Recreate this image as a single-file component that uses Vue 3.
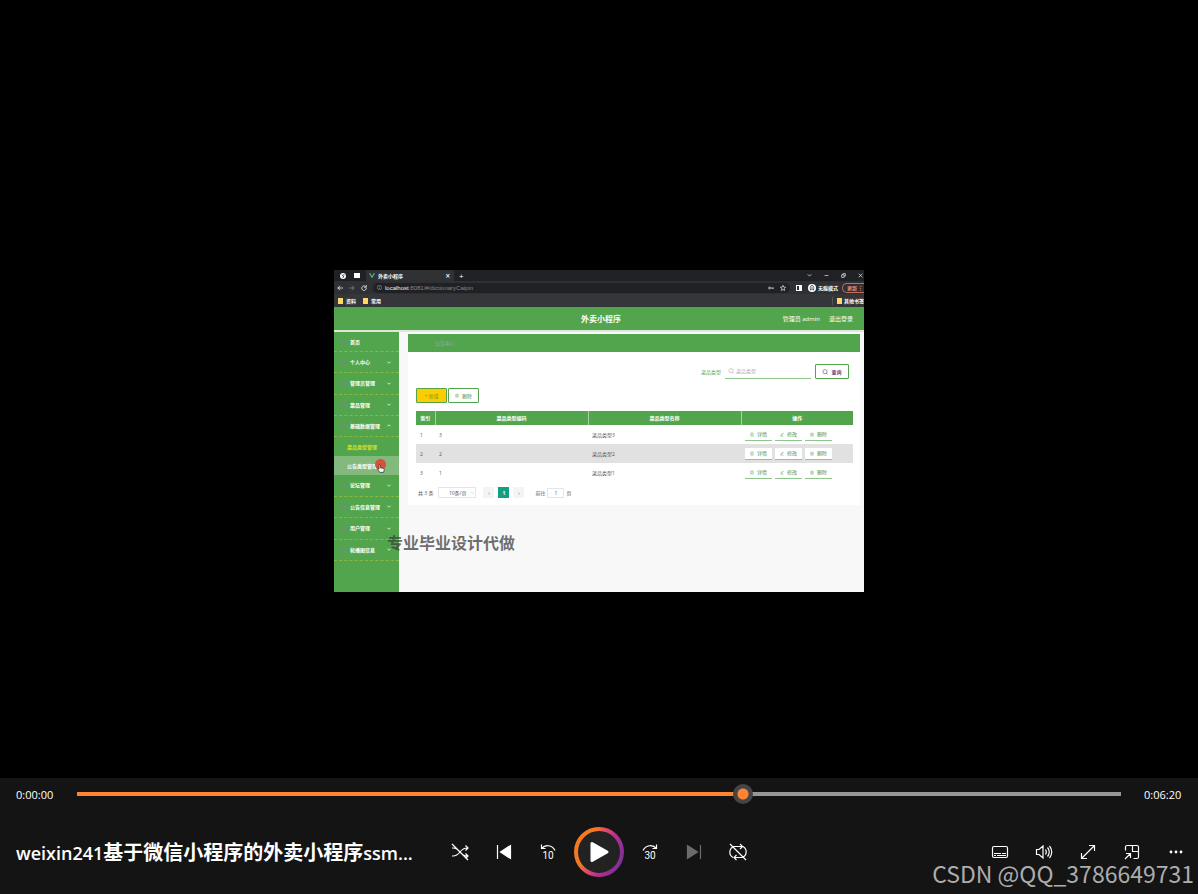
<script setup>
import { ref, computed } from 'vue'

const progress = ref(641)
const played = computed(() => progress.value / 10 + '%')

const topMenu = [
  { name: '个人中心', open: false },
  { name: '管理员管理', open: false },
  { name: '菜品管理', open: false },
  { name: '基础数据管理', open: true }
]
const bottomMenu = ['论坛管理', '公告信息管理', '用户管理', '轮播图信息']
const rows = [
  { index: 1, code: 3, name: '菜品类型3' },
  { index: 2, code: 2, name: '菜品类型2' },
  { index: 3, code: 1, name: '菜品类型1' }
]
const actions = [
  { name: '详情', icon: 'M2 1h6v8H2zM4 4h2M4 6h2' },
  { name: '修改', icon: 'M2 7l5-6 1 2-5 5zM1 9h8' },
  { name: '删除', icon: 'M1 3h8M4 1h2M2 3v6h6V3M4 5v2M6 5v2' }
]
</script>

<template>
  <div class="player">
    <main class="stage">
      <div class="video">
        <div class="tabs">
          <svg class="tabicon" viewBox="0 0 10 10"><circle cx="5" cy="5" r="5" fill="#fff" /><path d="M3 3l3 2-1 3M6 2l2 2" stroke="#222" fill="none" stroke-width="1.5" /></svg>
          <span class="window"></span>
          <div class="tab">
            <svg class="vue" viewBox="0 0 10 8"><path d="M1 0l4 7 4-7" fill="none" stroke="#41b883" stroke-width="2" /></svg>
            <span>外卖小程序</span>
            <button class="plain close" aria-label="关闭标签页">×</button>
          </div>
          <button class="plain new" aria-label="新标签页">+</button>
          <div class="wincontrols">
            <svg viewBox="0 0 8 8"><path d="M1 2l3 3 3-3" /></svg>
            <svg viewBox="0 0 8 8"><path d="M1 4h6" /></svg>
            <svg viewBox="0 0 8 8"><path d="M1 3h4v4H1zM3 3V1h4v4H5" /></svg>
            <svg viewBox="0 0 8 8"><path d="M1 1l6 6M7 1L1 7" /></svg>
          </div>
        </div>
        <div class="toolbar">
          <svg class="nav" viewBox="0 0 8 8"><path d="M8 4H1M4 1L1 4l3 3" /></svg>
          <svg class="nav dim" viewBox="0 0 8 8"><path d="M0 4h7M4 1l3 3-3 3" /></svg>
          <svg class="nav" viewBox="0 0 8 8"><path d="M7 4a3 3 0 1 1-1-2M7 0v3H4" /></svg>
          <div class="address">
            <svg class="info" viewBox="0 0 8 8"><circle cx="4" cy="4" r="3.5" /><path d="M4 2v1M4 4v2" /></svg>
            <span class="url"><b>localhost</b>:8081/#/dictionaryCaipin</span>
            <svg class="nav" viewBox="0 0 8 8"><circle cx="2" cy="4" r="1.3" /><path d="M3 4h5v1M6 4v1" /></svg>
            <svg class="nav" viewBox="0 0 8 8"><path d="M4 .5l1 2.3 2.5.2-2 1.7.7 2.6L4 6 1.8 7.3l.7-2.6-2-1.7 2.5-.2z" /></svg>
          </div>
          <span class="panel"></span>
          <svg class="avatar" viewBox="0 0 10 10"><circle cx="5" cy="5" r="5" fill="#fff" /><path d="M2 5h6M3 4l1-2h2l1 2" stroke="#333" fill="none" /><circle cx="3.5" cy="7" r="1" /><circle cx="6.5" cy="7" r="1" /></svg>
          <span class="private">无痕模式</span>
          <button class="update">更新<i>⋮</i></button>
        </div>
        <div class="bookmarks">
          <i class="folder"></i><span>资料</span>
          <i class="folder"></i><span>常用</span>
          <span class="other"><i class="folder"></i>其他书签</span>
        </div>
        <header class="apphead">
          <h2>外卖小程序</h2>
          <span class="user">管理员 admin</span>
          <a href="#">退出登录</a>
        </header>
        <div class="appbody">
          <nav class="side">
            <a href="#" class="item first"><i class="dot"></i>首页</a>
            <div class="group top">
              <a v-for="m in topMenu" :key="m.name" href="#" class="item">
                <i class="dot"></i>{{ m.name }}
                <svg class="chev" viewBox="0 0 8 6"><path :d="m.open ? 'M2 4l2-2 2 2' : 'M2 2l2 2 2-2'" /></svg>
              </a>
            </div>
            <a href="#" class="sub current">菜品类型管理</a>
            <a href="#" class="sub hover">公告类型管理
              <span class="click"></span>
              <svg class="hand" viewBox="0 0 12 14"><path d="M4 1c1 0 1 .5 1 1v4l5 1c1 0 1 1 1 2l-1 4H4L1 8c0-1 1-1 2 0V2c0-1 0-1 1-1z" fill="#fff" stroke="#222" /></svg>
            </a>
            <div class="group bottom">
              <a v-for="m in bottomMenu" :key="m" href="#" class="item">
                <i class="dot"></i>{{ m }}
                <svg class="chev" viewBox="0 0 8 6"><path d="M2 2l2 2 2-2" /></svg>
              </a>
            </div>
          </nav>
          <section class="content">
            <div class="crumb">公告中心</div>
            <div class="card">
              <form class="search" @submit.prevent>
                <label for="kind">菜品类型</label>
                <div class="field">
                  <svg viewBox="0 0 10 10"><circle cx="5" cy="4.5" r="3.5" /><path d="M7 7l2 2" /></svg>
                  <input id="kind" type="text" placeholder="菜品类型" />
                </div>
                <button class="query">
                  <svg viewBox="0 0 10 10"><circle cx="5" cy="4.5" r="3.5" /><path d="M7 7l2 2" /></svg>查询
                </button>
              </form>
              <div class="ops">
                <button class="add">+ 新增</button>
                <button class="del"><svg viewBox="0 0 10 10"><path :d="actions[2].icon" /></svg>删除</button>
              </div>
              <table>
                <thead>
                  <tr><th class="c1">索引</th><th class="c2">菜品类型编码</th><th class="c3">菜品类型名称</th><th>操作</th></tr>
                </thead>
                <tbody>
                  <tr v-for="r in rows" :key="r.index">
                    <td>{{ r.index }}</td><td>{{ r.code }}</td><td>{{ r.name }}</td>
                    <td>
                      <div class="acts">
                        <button v-for="a in actions" :key="a.name"><svg viewBox="0 0 10 10"><path :d="a.icon" /></svg>{{ a.name }}</button>
                      </div>
                    </td>
                  </tr>
                </tbody>
              </table>
              <div class="pager">
                <span>共 3 条</span>
                <button class="size">10条/页<svg viewBox="0 0 8 6"><path d="M2 2l2 2 2-2" /></svg></button>
                <button class="pg" aria-label="上一页">‹</button>
                <button class="pg on">1</button>
                <button class="pg" aria-label="下一页">›</button>
                <label class="jump">前往<input type="text" value="1" />页</label>
              </div>
            </div>
          </section>
        </div>
        <div class="mark">专业毕业设计代做</div>
      </div>
    </main>

    <footer class="controls">
      <div class="timeline">
        <span>0:00:00</span>
        <input v-model="progress" type="range" min="0" max="1000" aria-label="播放进度" :style="{ '--played': played }" />
        <span>0:06:20</span>
      </div>
      <div class="bar">
        <h1><span>weixin241</span>基于微信小程序的外卖小程序<span>ssm...</span></h1>
        <div class="center">
          <button aria-label="随机播放">
            <svg viewBox="0 0 20 20"><path d="M2 6h1c3 0 5 1.500 7 4s4 4 7 4h1M2 14h1c3 0 5-1.500 7-4s4-4 7-4h1M15.500 3.500L18 6l-2.500 2.500M15.500 11.500L18 14l-2.500 2.500M2 2l16 16" /></svg>
          </button>
          <button aria-label="上一个">
            <svg viewBox="0 0 20 20"><path d="M3.500 3v14" /><path class="fill" d="M16.500 3.500v13L6.500 10z" /></svg>
          </button>
          <button aria-label="后退 10 秒">
            <svg viewBox="0 0 20 20"><path d="M3.500 2.500v4h4M3.500 6.500C7 2.500 14 2.500 17 8.500" /><text x="10" y="17">10</text></svg>
          </button>
          <button class="play" aria-label="播放">
            <svg viewBox="0 0 50 50">
              <defs>
                <linearGradient id="ring" x1="0" y1=".3" x2="1" y2=".75">
                  <stop offset=".25" stop-color="#f37a22" /><stop offset=".4" stop-color="#e85060" /><stop offset=".65" stop-color="#bd2c90" /><stop offset="1" stop-color="#753394" />
                </linearGradient>
              </defs>
              <circle cx="25" cy="25" r="23" fill="#222" stroke="url(#ring)" stroke-width="4" />
              <path d="M18 16.500v17l15-8.500z" fill="#fff" stroke="#fff" stroke-width="3" stroke-linejoin="round" />
            </svg>
          </button>
          <button aria-label="前进 30 秒">
            <svg viewBox="0 0 20 20"><path d="M16.500 2.500v4h-4M16.500 6.500C13 2.500 6 2.500 3 8.500" /><text x="10" y="17">30</text></svg>
          </button>
          <button class="off" aria-label="下一个">
            <svg viewBox="0 0 20 20"><path d="M16.500 3v14" /><path class="fill" d="M3.500 3.500v13l10-6.500z" /></svg>
          </button>
          <button aria-label="循环播放">
            <svg viewBox="0 0 20 20"><path d="M5 15.500A6 6 0 0 1 6 4.500h8M12 2l2.500 2.500L12 7M15 4.500a6 6 0 0 1-1 11H6M8.500 13L6 15.500 8.500 18M2 2l16 16" /></svg>
          </button>
        </div>
        <div class="right">
          <button aria-label="字幕">
            <svg viewBox="0 0 20 20"><rect x="2.500" y="4.500" width="15" height="11" rx="1.500" /><path d="M4 11.500h7M12 11.500h4M4 13.500h2M7 13.500h9" /></svg>
          </button>
          <button aria-label="音量">
            <svg viewBox="0 0 20 20"><path d="M2.500 7.500v5H5l4 3.500V4L5 7.500zM11.500 7.500c1 1.500 1 3.500 0 5M13.500 5.500c2.300 2.500 2.300 6.500 0 9M15.500 4c3 3.500 3 8.500 0 12" /></svg>
          </button>
          <button aria-label="全屏">
            <svg viewBox="0 0 20 20"><path d="M3.500 16.500l13-13M11 3.500h5.500V9M3.500 11v5.500H9" /></svg>
          </button>
          <button aria-label="迷你播放器">
            <svg viewBox="0 0 20 20"><path d="M3.500 8.500V5a1.500 1.500 0 0 1 1.500-1.500h10A1.500 1.500 0 0 1 16.500 5v10a1.500 1.500 0 0 1-1.500 1.500h-3.500M10.500 3.500v6h6M3 17l5.500-5.500M4 11.500h4.500V16" /></svg>
          </button>
          <button aria-label="更多">
            <svg viewBox="0 0 20 20"><g class="dots"><circle cx="5" cy="10" r="1.400" /><circle cx="10" cy="10" r="1.400" /><circle cx="15" cy="10" r="1.400" /></g></svg>
          </button>
        </div>
      </div>
    </footer>
    <div class="csdn">CSDN @QQ_3786649731</div>
  </div>
</template>

<style>
body { margin: 0; background: #000; }
</style>

<style scoped>
* { box-sizing: border-box; }
button { border: 0; padding: 0; margin: 0; background: none; color: inherit; font: inherit; }
input { font: inherit; margin: 0; border-radius: 0; }
a { color: inherit; text-decoration: none; }
i { font-style: normal; }
svg { display: block; fill: none; stroke: currentColor; flex: none; }
.player { position: relative; min-height: 100vh; display: flex; flex-direction: column; background: #000; color: #fff; font-family: "Open Sans", "Noto Sans CJK SC", sans-serif; }
.stage { flex: 1; display: flex; align-items: center; justify-content: center; padding-top: 84px; }

.video { position: relative; width: 530px; height: 322px; display: flex; flex-direction: column; overflow: hidden; background: #f8f8f8; font-size: 5px; line-height: 8px; white-space: nowrap; }
.tabs { height: 11px; background: #202124; display: flex; align-items: center; padding-left: 6px; }
.tabicon { width: 6px; height: 6px; stroke: none; }
.window { width: 6px; height: 5px; background: #fff; margin-left: 8px; }
.tab { width: 88px; height: 11px; margin-left: 6px; padding: 0 4px 0 3px; display: flex; align-items: center; gap: 3px; background: #303135; font-weight: 600; }
.vue { width: 6px; height: 5px; }
.plain { font-size: 8px; line-height: 8px; }
.close { margin-left: auto; }
.new { margin-left: 5px; }
.wincontrols { margin-left: auto; padding-right: 1px; display: flex; gap: 12px; }
.wincontrols svg { width: 5px; height: 5px; }
.toolbar { height: 13px; background: #2f3034; display: flex; align-items: center; padding-left: 3px; gap: 6px; }
.nav { width: 6px; height: 6px; }
.dim { color: #888; }
.address { flex: 1; height: 10px; display: flex; align-items: center; gap: 6px; padding: 0 4px; border-radius: 5px; background: #202124; color: #ddd; }
.info { width: 5px; height: 5px; margin-right: -3px; color: #999; }
.url { flex: 1; color: #85868a; font-family: "Liberation Sans", sans-serif; font-size: 6px; }
.url b { color: #eee; font-weight: 400; }
.panel { width: 6px; height: 6px; border: 1px solid #fff; border-right-width: 3px; }
.avatar { width: 8px; height: 8px; stroke: none; fill: #333; }
.private { font-weight: 600; margin: 0 -2px 0 -4px; }
.update { width: 23px; height: 10px; margin-right: -1px; border: 1px solid #c0705f; border-right: 0; border-radius: 5px 0 0 5px; color: #f28b72; font-weight: 600; line-height: 8px; display: flex; justify-content: space-between; padding: 0 2px 0 4px; }
.bookmarks { height: 13px; background: #35363a; display: flex; align-items: center; padding-left: 4px; gap: 3px; font-weight: 600; }
.bookmarks span + .folder { margin-left: 4px; }
.folder { width: 5px; height: 6px; background: #ffd86b; }
.bookmarks .other { margin-left: auto; padding-left: 4px; border-left: 1px solid #55565a; display: flex; align-items: center; gap: 2px; }
.apphead { height: 25px; border-bottom: 2px solid #dde8dc; background: #52a54c; display: flex; align-items: center; justify-content: flex-end; position: relative; gap: 9px; padding-right: 11px; font-size: 6px; }
.apphead h2 { position: absolute; inset: 0; margin: 0; padding-left: 4px; text-align: center; font-size: 8px; line-height: 24px; font-weight: 700; pointer-events: none; }
.appbody { flex: 1; display: flex; }
.side { width: 65px; background: #52a54c; font-weight: 600; }
.item { position: relative; display: flex; align-items: center; padding-left: 7px; gap: 4px; border-bottom: 1px dashed #86b93c; }
.first { height: 20px; }
.group { display: flex; flex-direction: column; }
.group .item { flex: 1; }
.top { height: 85px; }
.bottom { height: 86px; }
.dot { width: 5px; height: 5px; border-radius: 2px; background: #6b9373; }
.chev { width: 6px; height: 5px; margin-left: auto; margin-right: 7px; }
.sub { position: relative; display: flex; align-items: center; height: 19px; padding-left: 13px; }
.current { color: #d9df28; }
.hover { background: #83b97d; }
.click { position: absolute; left: 41px; top: 3px; width: 11px; height: 11px; border-radius: 50%; background: #d85237; }
.hand { position: absolute; left: 43px; top: 8px; width: 8px; height: 9px; }
.content { flex: 1; padding: 2px 4px 0 9px; }
.crumb { height: 18px; background: #52a54c; color: #8cabb8; padding-left: 27px; line-height: 18px; }
.card { height: 153px; background: #fff; padding: 12px 7px 0 8px; color: #555; }
.search { height: 15px; display: flex; justify-content: flex-end; align-items: center; padding-right: 4px; color: #52a54c; }
.field { display: flex; align-items: center; width: 86px; height: 15px; margin: 0 4px; padding-left: 3px; gap: 2px; border-bottom: 1px solid #8fc48b; color: #aaa; }
.field svg, .query svg { width: 6px; height: 6px; }
.field input { min-width: 0; flex: 1; border: 0; padding: 0; background: none; outline: 0; }
.field input::placeholder { color: #aaa; }
.query { display: flex; align-items: center; justify-content: center; gap: 3px; width: 34px; height: 15px; border: 1px solid #52a54c; border-radius: 1px; color: #6b3a7c; font-weight: 600; }
.ops { display: flex; gap: 1px; margin-top: 9px; }
.ops button { width: 31px; height: 15px; border: 1px solid #52a54c; border-radius: 1px; display: flex; align-items: center; justify-content: center; gap: 3px; color: #4d8d51; }
.ops svg, .acts svg { width: 4px; height: 5px; }
.ops .add { background: #fc0; color: #7a9a2b; }
table { width: 100%; margin-top: 8px; border-collapse: collapse; table-layout: fixed; }
th { height: 14px; padding: 0; background: #52a54c; color: #fff; border-right: 1px solid #a8d2a4; font-weight: 700; }
th:last-child { border-right: 0; }
.c1 { width: 19px; }
.c2, .c3 { width: 153px; }
td { height: 19px; padding: 0 4px; }
tbody tr:nth-child(2) { background: #e1e1e1; }
.acts { display: flex; gap: 3px; }
.acts button { width: 27px; height: 12px; display: flex; align-items: center; justify-content: center; gap: 3px; background: #fff; border-bottom: 1px solid #8fc48b; color: #4d8d51; }
.pager { height: 11px; margin-top: 5px; display: flex; align-items: center; padding-left: 2px; }
.pager button { height: 11px; }
.size { width: 38px; margin: 0 7px 0 5px; border: 1px solid #e6e6e6; display: flex; align-items: center; justify-content: flex-end; gap: 4px; }
.size svg { width: 5px; height: 4px; color: #bbb; }
.pg { width: 11px; margin-right: 4px; background: #f4f4f5; }
.pager .on { background: #12a085; color: #fff; font-weight: 700; }
.jump { margin-left: 7px; display: flex; align-items: center; gap: 2px; }
.jump input { width: 17px; height: 10px; padding: 0; border: 1px solid #e6e6e6; text-align: center; color: inherit; background: #fff; }
.mark { position: absolute; left: 53px; top: 261px; font-size: 16px; line-height: 24px; font-weight: 700; color: rgba(65, 65, 65, .75); }

.controls { background: #141414; }
.timeline { height: 32px; display: flex; align-items: center; justify-content: space-between; padding: 0 16px; font-size: 11px; }
.timeline span { width: 38px; }
.timeline input { flex: 1; margin: 0 23px; height: 20px; appearance: none; background: linear-gradient(to right, #ff8534 var(--played), #979797 var(--played)) center / 100% 4px no-repeat; outline: 0; }
.timeline input::-webkit-slider-thumb { appearance: none; width: 20px; height: 20px; border-radius: 50%; background: radial-gradient(circle, #ff8534 5px, #454545 6px); }
.bar { height: 84px; display: grid; grid-template-columns: 1fr auto 1fr; align-items: center; }
h1 { margin: 0; padding: 2px 0 0 16px; min-width: 0; overflow: hidden; white-space: nowrap; font-size: 20px; line-height: 28px; font-weight: 700; }
h1 span { font-size: 18px; font-weight: 600; }
.center, .right { display: flex; align-items: center; }
.right { justify-content: flex-end; }
.center button, .right button { width: 44px; height: 44px; display: grid; place-items: center; }
.bar svg { width: 20px; height: 20px; stroke-width: 1.2; }
.bar .fill { fill: currentColor; }
.bar .dots { fill: currentColor; stroke: none; }
.bar text { fill: currentColor; stroke: none; font-family: Roboto, sans-serif; font-size: 10px; text-anchor: middle; }
.center .play { width: 50px; height: 50px; margin: 0 4px; }
.play svg { width: 50px; height: 50px; }
.off { color: #6c6c6c; }
.csdn { position: absolute; right: 4px; bottom: 8px; font-family: "Noto Sans CJK SC", sans-serif; font-size: 23px; line-height: 26px; color: #adadad; pointer-events: none; white-space: nowrap; }
</style>
